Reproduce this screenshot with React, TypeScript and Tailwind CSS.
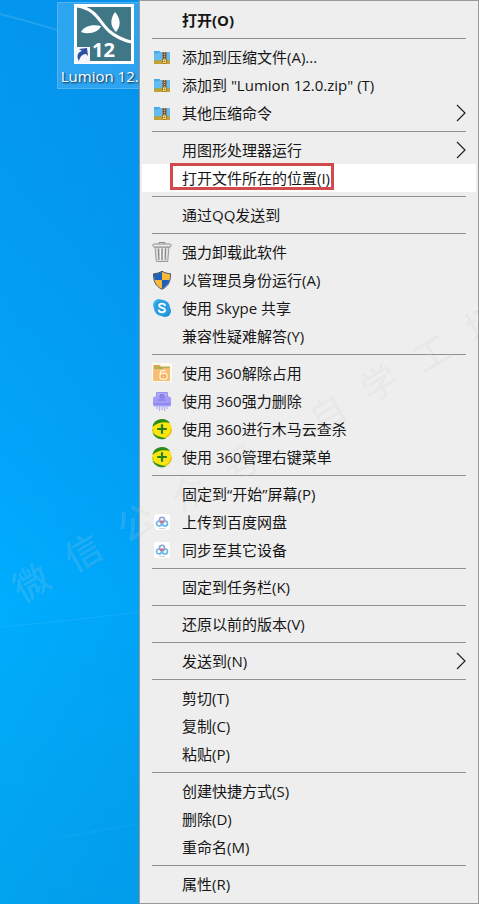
import type { ReactNode } from "react";
import { clsx } from "clsx";

type Item = {
  label: string;
  icon?: ReactNode;
  bold?: boolean;
  submenu?: boolean;
  active?: boolean;
};

function ZipIcon() {
  return (
    <svg viewBox="0 0 18 18" className="size-[18px]" aria-hidden="true">
      <path d="M1 3h5.500l1.500 1.500h9V13H1z" fill="#4aa8e6" />
      <path d="M1 6l8-2h8v8H1z" fill="#63bdf0" />
      <path d="M1 12h16v4H1z" fill="#c2a136" />
      <path d="M1 12h16v1H1z" fill="#93ab5c" />
      <path d="M9.500 4h4v8h-4z" fill="#80583a" />
      <path d="M11.500 4v8" stroke="#d8b36a" strokeWidth="1" strokeDasharray="1 1" />
      <rect x="9.500" y="11" width="4" height="4.500" rx="1" fill="#fbe184" stroke="#94641c" strokeWidth="0.800" />
      <path d="M10.700 13.300h1.600" stroke="#6b4310" />
    </svg>
  );
}

function TrashIcon() {
  return (
    <svg viewBox="0 0 20 22" className="h-[22px] w-5" aria-hidden="true">
      <path d="M3 6h14l-1.300 14.500H4.300z" fill="#dedede" stroke="#9a9a9a" />
      <path d="M6.500 7.500l.4 11.500M10 7.500V19M13.500 7.500L13.100 19" stroke="#858585" strokeWidth="1.300" />
      <path d="M8.300 7.500V19M11.800 7.500V19" stroke="#fafafa" />
      <rect x="1" y="3" width="18" height="3" rx="1" fill="#ececec" stroke="#8f8f8f" />
      <path d="M7 3V1.500h6V3" fill="none" stroke="#8f8f8f" />
    </svg>
  );
}

function ShieldIcon() {
  return (
    <svg viewBox="0 0 20 20" className="size-5" aria-hidden="true">
      <defs>
        <clipPath id="shield">
          <path d="M10 1.500C7.500 3 5 3.800 2 4c-.2 6.500 1.500 11.500 8 15 6.500-3.500 8.200-8.500 8-15-3-.2-5.500-1-8-2.500z" />
        </clipPath>
      </defs>
      <g clipPath="url(#shield)">
        <path d="M0 0h10v10H0z" fill="#1f62b5" />
        <path d="M10 0h10v10H10z" fill="#f9b934" />
        <path d="M0 10h10v10H0z" fill="#f9b934" />
        <path d="M10 10h10v10H10z" fill="#1f62b5" />
      </g>
      <path
        d="M10 1.200C7.500 2.800 5 3.500 1.500 3.800 1.300 10.500 3 15.800 10 19.300c7-3.500 8.700-8.800 8.500-15.500C15 3.500 12.500 2.800 10 1.200z"
        fill="none"
        stroke="#40536b"
      />
    </svg>
  );
}

function SkypeIcon() {
  return (
    <svg viewBox="0 0 20 20" className="size-5" aria-hidden="true">
      <circle cx="7" cy="7" r="6" fill="#3cb4ee" />
      <circle cx="13" cy="13" r="6" fill="#1f8fdc" />
      <circle cx="10" cy="10" r="8" fill="#2b9fe2" />
      <path
        d="M13 7.300C12.300 6 11.300 5.600 10 5.600c-1.700 0-2.800.8-2.800 2 0 3 5.800 1.500 5.800 4.500 0 1.400-1.300 2.200-3 2.200-1.600 0-2.700-.6-3.200-1.900"
        fill="none"
        stroke="#fff"
        strokeWidth="1.900"
        strokeLinecap="round"
      />
    </svg>
  );
}

function UnlockFolderIcon() {
  return (
    <svg viewBox="0 0 20 20" className="size-5" aria-hidden="true">
      <path d="M0 0h20v19H0z" fill="#fffaf0" />
      <path d="M1.500 2h6l1.500 1.500h9v14.500h-16.500z" fill="#e5a04a" />
      <path d="M3 4h14v2H3z" fill="#9db85c" />
      <path d="M1.500 6h9l1.500-1h6v13H1.500z" fill="#f8bd72" />
      <rect x="8" y="10.500" width="7" height="5.500" rx="2" fill="#f6a550" stroke="#fff3d8" strokeWidth="1.300" />
      <path d="M8.500 12V9.300c0-2.300 3.800-2.500 5-.8" fill="none" stroke="#fff3d8" strokeWidth="1.300" />
      <path d="M10.500 13.300h2" stroke="#fff3d8" />
    </svg>
  );
}

function ShredderIcon() {
  return (
    <svg viewBox="0 0 20 20" className="size-5" aria-hidden="true">
      <path d="M4.500 7V1.500h11V7" fill="#b1abf8" stroke="#9790ee" />
      <rect x="1" y="5.500" width="18" height="10" rx="2" fill="#a29bf7" />
      <path d="M1.500 13h17" stroke="#8780e4" strokeWidth="1.200" />
      <path d="M8 3.500h4V7H8z" fill="#8f87e8" stroke="#7d75d8" strokeWidth="0.800" />
      <path d="M6.500 9h7" stroke="#7d75d8" />
      <path d="M5 15.500v2.500M7.500 15.500V20M10 15.500V19M12.500 15.500V20M15 15.500v2.500" stroke="#b5b0f6" strokeWidth="1.300" />
    </svg>
  );
}

function Safe360Icon() {
  return (
    <svg viewBox="0 0 22 22" className="size-[22px]" aria-hidden="true">
      <circle cx="11" cy="11" r="9.800" fill="#fbe412" />
      <path d="M1.300 9A10 10 0 0 1 19 5C13 3.300 6 4.300 1.300 9z" fill="#2b8c1e" />
      <path d="M2 15.500A10 10 0 0 0 14.500 20.300C10 19.800 5.500 18.600 2 15.500z" fill="#2b8c1e" stroke="#2b8c1e" strokeWidth="0.800" />
      <path d="M1.700 11a9.300 9.300 0 0 0 1.600 5.300" stroke="#b9cf16" strokeWidth="1.200" fill="none" />
      <path d="M20.300 11a9.300 9.300 0 0 1-5.300 8.200" stroke="#e3b90c" strokeWidth="1.200" fill="none" />
      <path d="M11 6.200v9.600M6.200 11h9.600" stroke="#23801a" strokeWidth="2.200" />
    </svg>
  );
}

function BaiduPanIcon() {
  return (
    <svg viewBox="0 0 18 18" className="size-[18px]" aria-hidden="true">
      <rect x="1" y="1" width="16" height="16" rx="2.500" fill="#fff" />
      <circle cx="6" cy="10.500" r="2.500" fill="none" stroke="#6fb4ea" strokeWidth="1.700" />
      <circle cx="12" cy="10.500" r="2.500" fill="none" stroke="#62bbea" strokeWidth="1.700" />
      <circle cx="9" cy="6.800" r="2.500" fill="none" stroke="#86a6d8" strokeWidth="1.600" />
      <path d="M7.200 9.700L9 8l1.800 1.700" fill="none" stroke="#e2647a" strokeWidth="1.500" />
      <path d="M6 15.500h6" stroke="#b9bfc6" strokeWidth="0.700" />
    </svg>
  );
}

const groups: Item[][] = [
  [{ label: "打开(O)", bold: true }],
  [
    { label: "添加到压缩文件(A)...", icon: <ZipIcon /> },
    { label: '添加到 "Lumion 12.0.zip" (T)', icon: <ZipIcon /> },
    { label: "其他压缩命令", icon: <ZipIcon />, submenu: true },
  ],
  [
    { label: "用图形处理器运行", submenu: true },
    { label: "打开文件所在的位置(I)", active: true },
  ],
  [{ label: "通过QQ发送到" }],
  [
    { label: "强力卸载此软件", icon: <TrashIcon /> },
    { label: "以管理员身份运行(A)", icon: <ShieldIcon /> },
    { label: "使用 Skype 共享", icon: <SkypeIcon /> },
    { label: "兼容性疑难解答(Y)" },
  ],
  [
    { label: "使用 360解除占用", icon: <UnlockFolderIcon /> },
    { label: "使用 360强力删除", icon: <ShredderIcon /> },
    { label: "使用 360进行木马云查杀", icon: <Safe360Icon /> },
    { label: "使用 360管理右键菜单", icon: <Safe360Icon /> },
  ],
  [
    { label: "固定到“开始”屏幕(P)" },
    { label: "上传到百度网盘", icon: <BaiduPanIcon /> },
    { label: "同步至其它设备", icon: <BaiduPanIcon /> },
  ],
  [{ label: "固定到任务栏(K)" }],
  [{ label: "还原以前的版本(V)" }],
  [{ label: "发送到(N)", submenu: true }],
  [{ label: "剪切(T)" }, { label: "复制(C)" }, { label: "粘贴(P)" }],
  [{ label: "创建快捷方式(S)" }, { label: "删除(D)" }, { label: "重命名(M)" }],
  [{ label: "属性(R)" }],
];

const watermark = ["微", "信", "公", "众", "号", "：", "自", "学", "工", "场"];

function MenuItem({ item }: { item: Item }) {
  return (
    <button
      type="button"
      role="menuitem"
      className={clsx("flex h-7 w-full items-center pr-2.5 text-left", item.active && "bg-white")}
    >
      <span className="flex w-10 shrink-0 justify-center">{item.icon}</span>
      <span className={clsx("relative whitespace-nowrap", item.bold && "font-bold")}>
        {item.label}
        {item.active && <span className="absolute -top-[3px] -right-1 bottom-0 -left-3 border-3 border-[#d24a4c]" />}
      </span>
      {item.submenu && (
        <svg viewBox="0 0 10 18" className="ml-auto h-[18px] w-2.5" fill="none" aria-hidden="true">
          <path d="M1 1l8 8-8 8" stroke="#222" strokeWidth="1.200" />
        </svg>
      )}
    </button>
  );
}

function DesktopIcon() {
  return (
    <button
      type="button"
      className="relative mt-0.5 ml-[57px] flex h-[87px] w-[94px] shrink-0 flex-col items-center border border-[#6fbdf2]/60 bg-[#7cc4f5]/35 pt-px"
    >
      <svg viewBox="0 0 60 60" className="size-[60px]" aria-hidden="true">
        <path d="M0 0h60v60H0z" fill="#fff" />
        <path d="M3 3h54v54H3z" fill="#407787" />
        <path d="M3 2c20 3 22 16 32 25 7 6 14 9 22 11" fill="none" stroke="#fff" strokeWidth="3" />
        <path d="M7 28c3-6 11-8 20-6-2 6-12 9-20 6z" fill="#fff" />
        <path d="M42 28c-6-6-6-13-1-20 6 7 6 14 1 20z" fill="#fff" />
        <text x="18" y="53" fill="#fff" fontSize="20" fontWeight="700" fontFamily="Open Sans, sans-serif">
          12
        </text>
        <path d="M1 43h15v16H1z" fill="#f4f6fa" />
        <path d="M5 57c-3-5-1-9 3-10l-3-2 8-1 1 8-2-2c-4 0-6 3-7 7z" fill="#2c4f9e" />
      </svg>
      <span className="text-[15px] leading-6 whitespace-nowrap text-white text-shadow-[1px_1px_2px_#001a33]">
        Lumion 12.0
      </span>
    </button>
  );
}

export default function App() {
  return (
    <main
      lang="zh-CN"
      className="relative flex min-h-screen overflow-hidden bg-[#00a2f4] font-['Open_Sans','Noto_Sans_CJK_SC',sans-serif] text-[15px] leading-6 text-[#161616]"
    >
      <section
        aria-label="桌面"
        className="relative flex w-[139px] shrink-0 flex-col overflow-hidden bg-linear-[176deg,#0496ee_0%,#049bf2_22%,#02a4f9_48%,#00adfe_66%,#02a9f6_80%,#02a2ee_100%]"
      >
        <div className="absolute inset-0 bg-linear-to-r from-transparent to-[#0078d8]/15" />
        <svg
          viewBox="0 0 139 904"
          preserveAspectRatio="none"
          className="absolute inset-0 size-full"
          fill="none"
          stroke="#fff"
          aria-hidden="true"
        >
          <path d="M0 14q24 6 57 16" strokeOpacity="0.120" strokeWidth="2" />
          <path d="M0 627q70-6 139-15" strokeOpacity="0.080" />
          <path d="M60 838q40-8 79-14" strokeOpacity="0.060" />
        </svg>
        <DesktopIcon />
      </section>

      <div role="menu" className="min-w-0 flex-1 border border-[#999] bg-[#eee] px-0.5 py-[5px]">
        {groups.map((group, i) => (
          <div key={i} role="group">
            {i > 0 && <hr className="mx-2.5 my-1 border-[#919191]" />}
            {group.map((item) => (
              <MenuItem key={item.label} item={item} />
            ))}
          </div>
        ))}
      </div>

      <div
        aria-hidden="true"
        className="pointer-events-none absolute top-[580px] left-4 flex origin-left -rotate-[30deg] gap-6 text-4xl leading-6 font-medium text-white/15 text-shadow-[1px_1px_0_rgb(0_0_0/0.05)]"
      >
        {watermark.map((char) => (
          <span key={char} className={clsx("flex justify-center", char === "：" ? "w-4" : "w-9")}>
            {char}
          </span>
        ))}
      </div>
    </main>
  );
}
